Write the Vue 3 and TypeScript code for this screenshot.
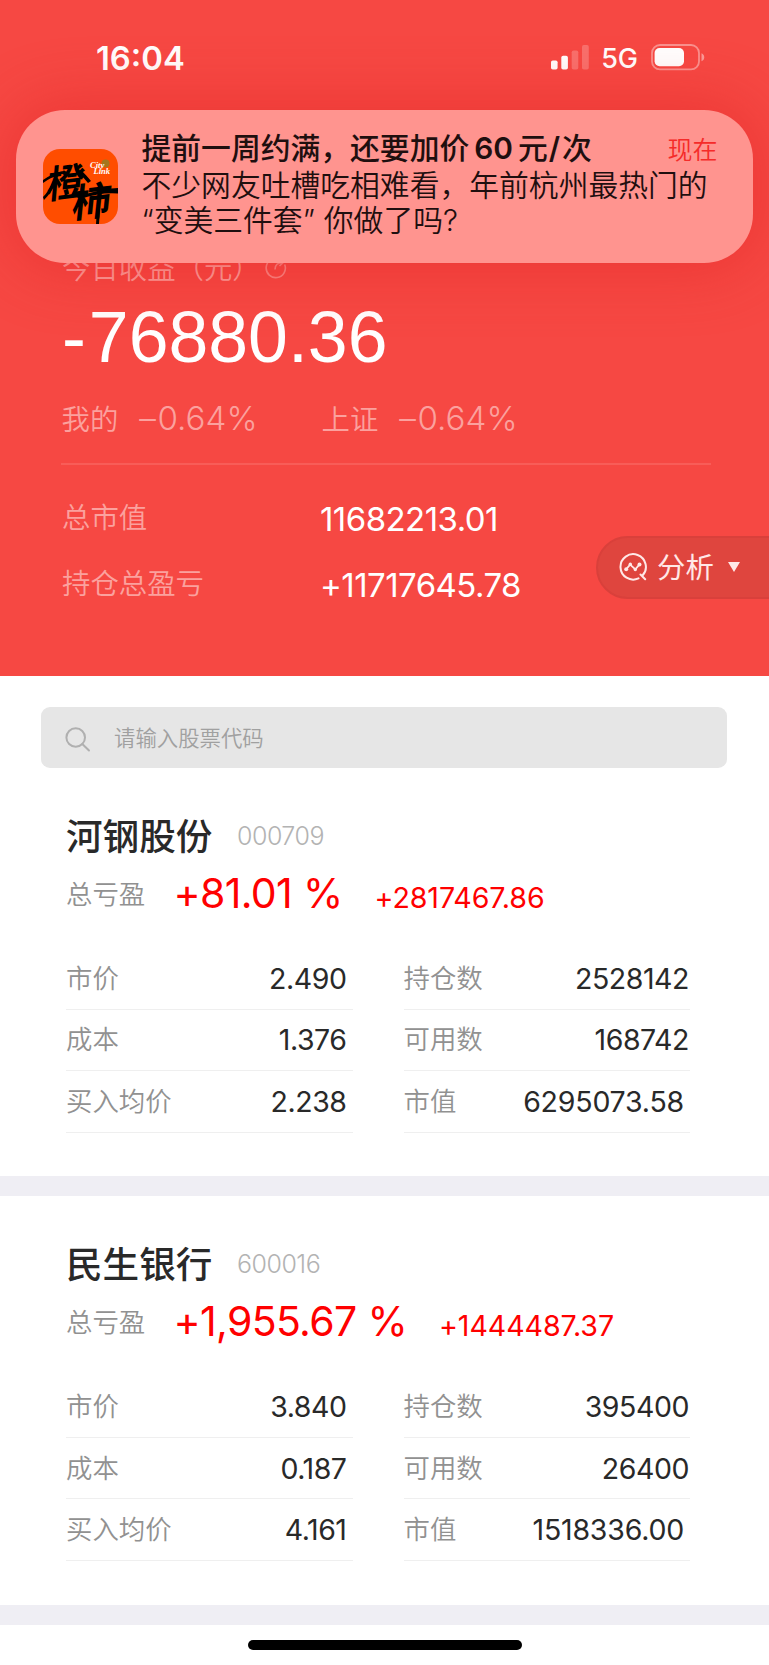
<script setup lang="ts">
interface Cell {
  label: string
  value: string
  inset?: boolean
}

interface Stock {
  name: string
  code: string
  percent: string
  profit: string
  left: Cell[]
  right: Cell[]
}

const stocks: Stock[] = [
  {
    name: '河钢股份',
    code: '000709',
    percent: '+81.01 %',
    profit: '+2817467.86',
    left: [
      { label: '市价', value: '2.490' },
      { label: '成本', value: '1.376' },
      { label: '买入均价', value: '2.238' },
    ],
    right: [
      { label: '持仓数', value: '2528142' },
      { label: '可用数', value: '168742' },
      { label: '市值', value: '6295073.58', inset: true },
    ],
  },
  {
    name: '民生银行',
    code: '600016',
    percent: '+1,955.67 %',
    profit: '+1444487.37',
    left: [
      { label: '市价', value: '3.840' },
      { label: '成本', value: '0.187' },
      { label: '买入均价', value: '4.161' },
    ],
    right: [
      { label: '持仓数', value: '395400' },
      { label: '可用数', value: '26400' },
      { label: '市值', value: '1518336.00', inset: true },
    ],
  },
]
</script>

<template>
  <div class="screen" lang="zh-CN">
    <header class="summary">
      <div class="status">
        <span class="clock">16:04</span>
        <div class="status-right">
          <svg class="signal" width="38" height="25" viewBox="0 0 38 25">
            <rect x="0" y="15.5" width="6.6" height="9" rx="1.8" fill="#fff" />
            <rect x="10.3" y="10.8" width="6.6" height="13.7" rx="1.8" fill="#fff" />
            <rect x="20.7" y="5.4" width="6.6" height="19.1" rx="1.8" fill="#fff" opacity=".22" />
            <rect x="31" y="0" width="6.8" height="24.5" rx="1.8" fill="#fff" opacity=".22" />
          </svg>
          <span class="network">5G</span>
          <svg class="battery" width="54" height="27" viewBox="0 0 54 27">
            <rect x="1" y="1" width="47" height="24.4" rx="8" fill="none" stroke="#fff" stroke-opacity=".4" stroke-width="1.8" />
            <rect x="3.6" y="4" width="29.4" height="18.2" rx="5" fill="#fff" />
            <path d="M50.5 9.2c2 .8 2.7 2.2 2.7 4s-.7 3.2-2.7 4z" fill="#fff" opacity=".45" />
          </svg>
        </div>
      </div>

      <div class="today">
        <span>今日收益（元）</span>
        <svg class="share" width="22" height="22" viewBox="0 0 22 22" fill="none" stroke="currentColor" stroke-width="1.6">
          <path d="M19.7 7.5A9.6 9.6 0 1 1 13.5 1.8" />
          <path d="M10 12.5C10 8 13 5.5 18 5.5M14.5 2l3.7 3.5-3.7 3.5" />
        </svg>
      </div>
      <div class="amount"><span>-</span>76880.36</div>
      <div class="rates">
        <div class="rate"><span>我的</span><b><i>–</i>0.64%</b></div>
        <div class="rate"><span>上证</span><b><i>–</i>0.64%</b></div>
      </div>
      <div class="rule"></div>
      <div class="total"><span>总市值</span><b>11682213.01</b></div>
      <div class="total"><span>持仓总盈亏</span><b>+11717645.78</b></div>

      <button class="analysis" type="button">
        <svg width="30" height="30" viewBox="0 0 30 30" fill="none" stroke="currentColor" stroke-width="2" stroke-linecap="round" stroke-linejoin="round">
          <path d="M24.5 23.5A12.7 12.7 0 1 0 20.5 26.4M22.5 22.5l4.7 4.7" />
          <path d="M8.2 17.3l3.9-4.7 5.3 4.7 3.9-4.7" stroke-width="1.8" />
          <g fill="currentColor" stroke="none">
            <circle cx="8.2" cy="17.3" r="2" /><circle cx="12.3" cy="12.3" r="1.7" />
            <circle cx="17.3" cy="17.5" r="1.7" /><circle cx="21.5" cy="12.5" r="2" />
          </g>
        </svg>
        <span>分析</span>
        <i class="caret"></i>
      </button>

      <aside class="notice">
        <svg class="app-icon" width="75" height="75" viewBox="0 0 75 75">
          <defs>
            <clipPath id="icon-shape"><rect width="75" height="75" rx="17" /></clipPath>
          </defs>
          <g clip-path="url(#icon-shape)">
            <rect width="75" height="75" fill="#ff4d00" />
            <circle cx="62.5" cy="14.5" r="4" fill="#a4761d" />
            <text class="brush" transform="translate(3 50) rotate(-7) skewX(-12)" font-size="38">橙</text>
            <text class="brush" transform="translate(28 69) rotate(-6) skewX(-12)" font-size="39">柿</text>
            <path d="M34 48.5Q56 39.5 75 39v5.5Q58 43 37 50z" />
            <path d="M0 31Q10 24 20 22L19 25Q8 28 0 34zM0 48Q6 42 10 32l3 1Q9 43 1 51zM38 21q6 6 10 11l-3 2q-5-6-9-10zM54 60l3 0-1 15h-3z" />
            <text class="tag" x="47" y="18.5">City</text>
            <text class="tag" x="50.5" y="25">Link</text>
          </g>
        </svg>
        <div class="notice-text">
          <div class="notice-head">
            <strong>提前一周约满，还要加价<em>60</em>元<em class="slash">/</em>次</strong>
            <time>现在</time>
          </div>
          <p>不少网友吐槽吃相难看，年前杭州最热门的</p>
          <p><q>“</q>变美三件套<q class="end">”</q>你做了吗?</p>
        </div>
      </aside>
    </header>

    <main>
      <div class="search">
        <svg width="26" height="26" viewBox="0 0 26 26" fill="none" stroke="currentColor" stroke-width="2">
          <circle cx="10.7" cy="10.5" r="9.3" />
          <path d="M17.3 17l6.7 6.5" stroke-linecap="round" />
        </svg>
        <span>请输入股票代码</span>
      </div>

      <section v-for="stock in stocks" :key="stock.code" class="stock">
        <div class="title">
          <h2>{{ stock.name }}</h2>
          <span class="code">{{ stock.code }}</span>
        </div>
        <div class="profit">
          <span class="profit-label">总亏盈</span>
          <span class="percent">{{ stock.percent }}</span>
          <span class="money">{{ stock.profit }}</span>
        </div>
        <div class="grid">
          <div v-for="(column, index) in [stock.left, stock.right]" :key="index" class="column" :class="{ second: index === 1 }">
            <div v-for="cell in column" :key="cell.label" class="cell">
              <span>{{ cell.label }}</span>
              <b :class="{ inset: cell.inset }">{{ cell.value }}</b>
            </div>
          </div>
        </div>
      </section>
    </main>
    <div class="home"><i></i></div>
  </div>
</template>

<style>
body {
  margin: 0;
  background: #fff;
}
</style>

<style scoped>
.screen {
  width: 769px;
  height: 1665px;
  overflow: hidden;
  position: relative;
  background: #fff;
  font-family: Inter, "Noto Sans CJK SC", sans-serif;
  color: #292929;
  white-space: nowrap;
}
.screen * {
  box-sizing: border-box;
}
.summary {
  position: relative;
  height: 676px;
  background: #f64843;
  color: #fba19e;
  overflow: hidden;
}
.status {
  height: 115px;
  padding: 0 64px 0 96px;
  display: flex;
  align-items: center;
  justify-content: space-between;
  color: #fff;
}
.clock {
  font-size: 32.8px;
  font-weight: 600;
}
.status-right {
  display: flex;
  align-items: center;
}
.network {
  margin: 2px 13px 0 12px;
  font-size: 27px;
  font-weight: 450;
}
.today {
  margin-top: 133px;
  padding: 0 0 3px 62px;
  height: 40px;
  display: flex;
  align-items: center;
  font-size: 28.4px;
  font-weight: 350;
}
.share {
  margin: 3px 0 0 4px;
  opacity: .75;
}
.amount {
  margin-top: 1px;
  padding-left: 62px;
  height: 96px;
  line-height: 96px;
  font-family: "Liberation Sans", Arial, sans-serif;
  font-size: 71.6px;
  color: #fff;
}
.amount span {
  margin-right: 3px;
}
.rates {
  margin: 10px 0 20px;
  padding-left: 61.5px;
  height: 48px;
  display: flex;
  font-size: 28.4px;
  font-weight: 350;
}
.rate {
  width: 260px;
  display: flex;
  align-items: center;
}
.rate span {
  padding-bottom: 3px;
}
.rate b {
  margin: -2px 0 0 21px;
  font-size: 33.2px;
  font-weight: 300;
}
.rate i {
  margin-right: 1.5px;
  font-style: normal;
}
.rule {
  height: 2px;
  margin: 0 58px 20px 61px;
  background: #f85d58;
}
.total {
  height: 66px;
  padding-left: 62px;
  display: flex;
  align-items: center;
  font-size: 28.4px;
  font-weight: 350;
}
.total span {
  width: 258px;
  padding-bottom: 5px;
}
.total b {
  padding-top: 2px;
  font-size: 33px;
  font-weight: 400;
  letter-spacing: -.55px;
  color: #fff;
}
.analysis {
  position: absolute;
  right: -2px;
  top: 536px;
  width: 175px;
  height: 63px;
  padding: 0 0 0 21px;
  display: flex;
  align-items: center;
  border: 2px solid #d9403b;
  border-radius: 32px 0 0 32px;
  background: #df453e;
  color: #ffe8e7;
  font: 400 28.4px Inter, "Noto Sans CJK SC", sans-serif;
}
.analysis svg {
  margin: -2px 0 0 -1px;
}
.analysis span {
  margin-left: 9px;
  padding-bottom: 4px;
}
.caret {
  margin: -2px 0 0 14px;
  border: 6.5px solid transparent;
  border-top: 10px solid #ffe8e7;
  border-bottom: 0;
}
.notice {
  position: absolute;
  left: 16px;
  top: 110px;
  width: 736.5px;
  height: 153px;
  padding: 0 35px 0 27px;
  display: flex;
  align-items: center;
  border-radius: 49px;
  background: #ff948f;
  box-shadow: 0 0 60px 8px rgba(225, 35, 35, .45);
  color: #1f0f0f;
}
.notice-text {
  flex: 1;
  margin-left: 23.5px;
  padding-bottom: 4px;
  font-size: 29.8px;
  font-weight: 350;
  line-height: 35px;
}
.notice-head {
  display: flex;
  justify-content: space-between;
}
.notice-head strong {
  font-weight: 500;
}
.notice-head em {
  margin: 0 5px;
  font-style: normal;
  font-weight: 600;
}
.notice-head .slash {
  margin: 0 2px 0 1px;
}
.notice-head time {
  padding-top: 2px;
  font-size: 25px;
  color: #f52b29;
}
.notice p {
  margin: 0;
}
.notice q {
  quotes: none;
}
.notice .end {
  margin-right: 9px;
}
.brush {
  font-family: "Noto Sans CJK SC", sans-serif;
  font-weight: 700;
}
.tag {
  font: italic 700 8.5px "Liberation Serif", serif;
  fill: #fff;
}
.search {
  margin: 31px 42px 0 41px;
  height: 61px;
  padding-left: 24px;
  display: flex;
  align-items: center;
  border-radius: 9px;
  background: #e6e6e6;
  color: #b0b0b0;
}
.search svg {
  margin-top: 4px;
}
.search span {
  margin-left: 23px;
  padding-bottom: 2px;
  font-size: 21.4px;
  font-weight: 350;
  color: #a0a0a0;
}
.stock {
  height: 428.3px;
  padding: 43px 79px 0 66px;
  border-bottom: 20px solid #efeef4;
}
.title {
  height: 50px;
  display: flex;
  align-items: center;
}
.title h2 {
  margin: 0;
  width: 171px;
  padding-bottom: 4px;
  font-size: 36.6px;
  font-weight: 500;
}
.code {
  font-size: 25px;
  font-weight: 300;
  letter-spacing: -.5px;
  color: #b3b3b3;
}
.profit {
  margin-top: 8px;
  height: 50px;
  display: flex;
  align-items: center;
  color: #f00;
}
.profit-label {
  width: 107.5px;
  padding-bottom: 3px;
  font-size: 26.4px;
  font-weight: 350;
  color: #919191;
}
.percent {
  padding-bottom: 3px;
  font-size: 41px;
  font-weight: 400;
  letter-spacing: -.65px;
}
.money {
  margin-left: 32px;
  padding-top: 7px;
  font-size: 28.6px;
  font-weight: 400;
  letter-spacing: -.1px;
}
.grid {
  margin-top: 29px;
  display: flex;
  justify-content: space-between;
}
.column {
  width: 286.5px;
}
.cell {
  height: 61.6px;
  display: flex;
  align-items: center;
  justify-content: space-between;
  border-bottom: 1.5px solid #efefef;
}
.cell span {
  padding-bottom: 4px;
  font-size: 26.4px;
  font-weight: 350;
  color: #919191;
}
.cell b {
  padding-right: 6px;
  font-size: 28.5px;
  font-weight: 400;
  letter-spacing: -.45px;
}
.second .cell b {
  padding-right: 1px;
}
.second .cell .inset {
  padding-right: 6px;
  letter-spacing: -.2px;
}
.home {
  height: 41px;
  display: flex;
  align-items: center;
  justify-content: center;
}
.home i {
  width: 274px;
  height: 10px;
  border-radius: 5px;
  background: #000;
}
</style>
